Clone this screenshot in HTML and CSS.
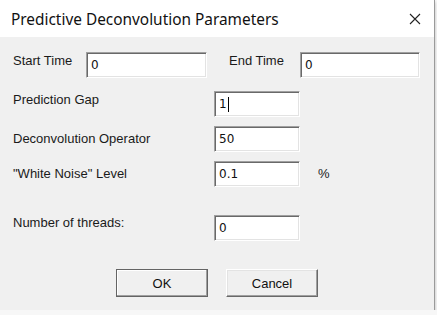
FILE: index.html
```html
<!DOCTYPE html>
<html>
<head>
    <title>Predictive Deconvolution Parameters</title>
    <link rel="stylesheet" href="styles.css">
</head>
<body>
    <div class="dialog">
        <div class="title-bar">
            <span class="title">Predictive Deconvolution Parameters</span>
            <svg class="close" width="12" height="12" viewBox="0 0 12 12">
                <path d="M1 1 L11 11 M11 1 L1 11" stroke="#222" stroke-width="1.1" fill="none"/>
            </svg>
        </div>
        <div class="content">
            <div class="row row-first">
                <span class="label label-start">Start Time</span>
                <div class="field field-wide">0</div>
                <span class="label label-end">End Time</span>
                <div class="field field-wide2">0</div>
            </div>
            <div class="row row-gap">
                <span class="label label-long">Prediction Gap</span>
                <div class="field">1<span class="caret"></span></div>
            </div>
            <div class="row row-op row-center">
                <span class="label label-long">Deconvolution Operator</span>
                <div class="field">50</div>
            </div>
            <div class="row row-op row-center">
                <span class="label label-long">"White Noise" Level</span>
                <div class="field">0.1</div>
                <span class="unit">%</span>
            </div>
            <div class="row row-threads">
                <span class="label label-long label-high">Number of threads:</span>
                <div class="field">0</div>
            </div>
            <div class="buttons">
                <button class="btn btn-default">OK</button>
                <button class="btn">Cancel</button>
            </div>
        </div>
    </div>
</body>
</html>
```

FILE: styles.css
```css
body {
    margin: 0;
    padding: 0;
    background: #f7f7f7;
    font-family: "Liberation Sans", Arial, sans-serif;
    color: #000;
}

.dialog {
    width: 434px;
    height: 310px;
    background: #f0f0f0;
    border-right: 1px solid #9a9a9a;
    box-shadow: 0 2px 3px rgba(0, 0, 0, 0.25);
    overflow: hidden;
}

.title-bar {
    height: 37px;
    background: #fff;
    display: flex;
    align-items: center;
    justify-content: space-between;
    padding: 0 11px 0 11px;
}

.title {
    font-family: "Noto Sans", sans-serif;
    font-size: 15.4px;
    color: #111;
    margin-top: 1px;
}

.close {
    margin-right: 2px;
}

.content {
    padding: 15px 0 0 13px;
    font-size: 13px;
}

.row {
    display: flex;
    align-items: flex-start;
    height: 26px;
}

.row-center {
    align-items: center;
}

.row-gap {
    margin-top: 13px;
}

.row-op {
    margin-top: 9px;
}

.row-threads {
    margin-top: 28px;
}

.label {
    color: #1a1a1a;
    white-space: nowrap;
    line-height: 16px;
    padding-top: 1px;
}

.row-center .label {
    padding-top: 0;
}

.label-high {
    padding-top: 0;
}

.label-start {
    width: 73px;
}

.label-end {
    width: 71px;
    margin-left: 22px;
}

.label-long {
    width: 201px;
}

.field {
    box-sizing: border-box;
    width: 86px;
    height: 26px;
    background: #fff;
    border-top: 1px solid #a0a0a0;
    border-left: 1px solid #a0a0a0;
    border-right: 1px solid #fff;
    border-bottom: 1px solid #fff;
    box-shadow: inset 1px 1px 0 #696969, inset -1px -1px 0 #e3e3e3;
    padding: 0 0 0 4px;
    line-height: 24px;
    font-family: "DejaVu Sans", sans-serif;
    font-size: 12px;
    color: #111;
    display: flex;
    align-items: center;
}

.field-wide {
    width: 121px;
}

.field-wide2 {
    width: 120px;
}

.caret {
    display: inline-block;
    width: 1px;
    height: 15px;
    background: #000;
    margin-left: 1px;
}

.unit {
    margin-left: 18px;
    color: #1a1a1a;
    line-height: 16px;
}

.buttons {
    display: flex;
    justify-content: center;
    gap: 18px;
    margin-top: 28px;
    margin-left: -13px;
}

.btn {
    box-sizing: border-box;
    width: 92px;
    height: 28px;
    background: #f0f0f0;
    font-family: "Liberation Sans", Arial, sans-serif;
    font-size: 13px;
    color: #111;
    border-top: 1px solid #fff;
    border-left: 1px solid #fff;
    border-right: 1px solid #696969;
    border-bottom: 1px solid #696969;
    box-shadow: inset -1px -1px 0 #a0a0a0, inset 1px 1px 0 #e3e3e3;
    padding: 0;
}

.btn-default {
    border: 1px solid #646464;
    box-shadow: inset -1px -1px 0 #a0a0a0, inset 1px 1px 0 #fff;
}
```
